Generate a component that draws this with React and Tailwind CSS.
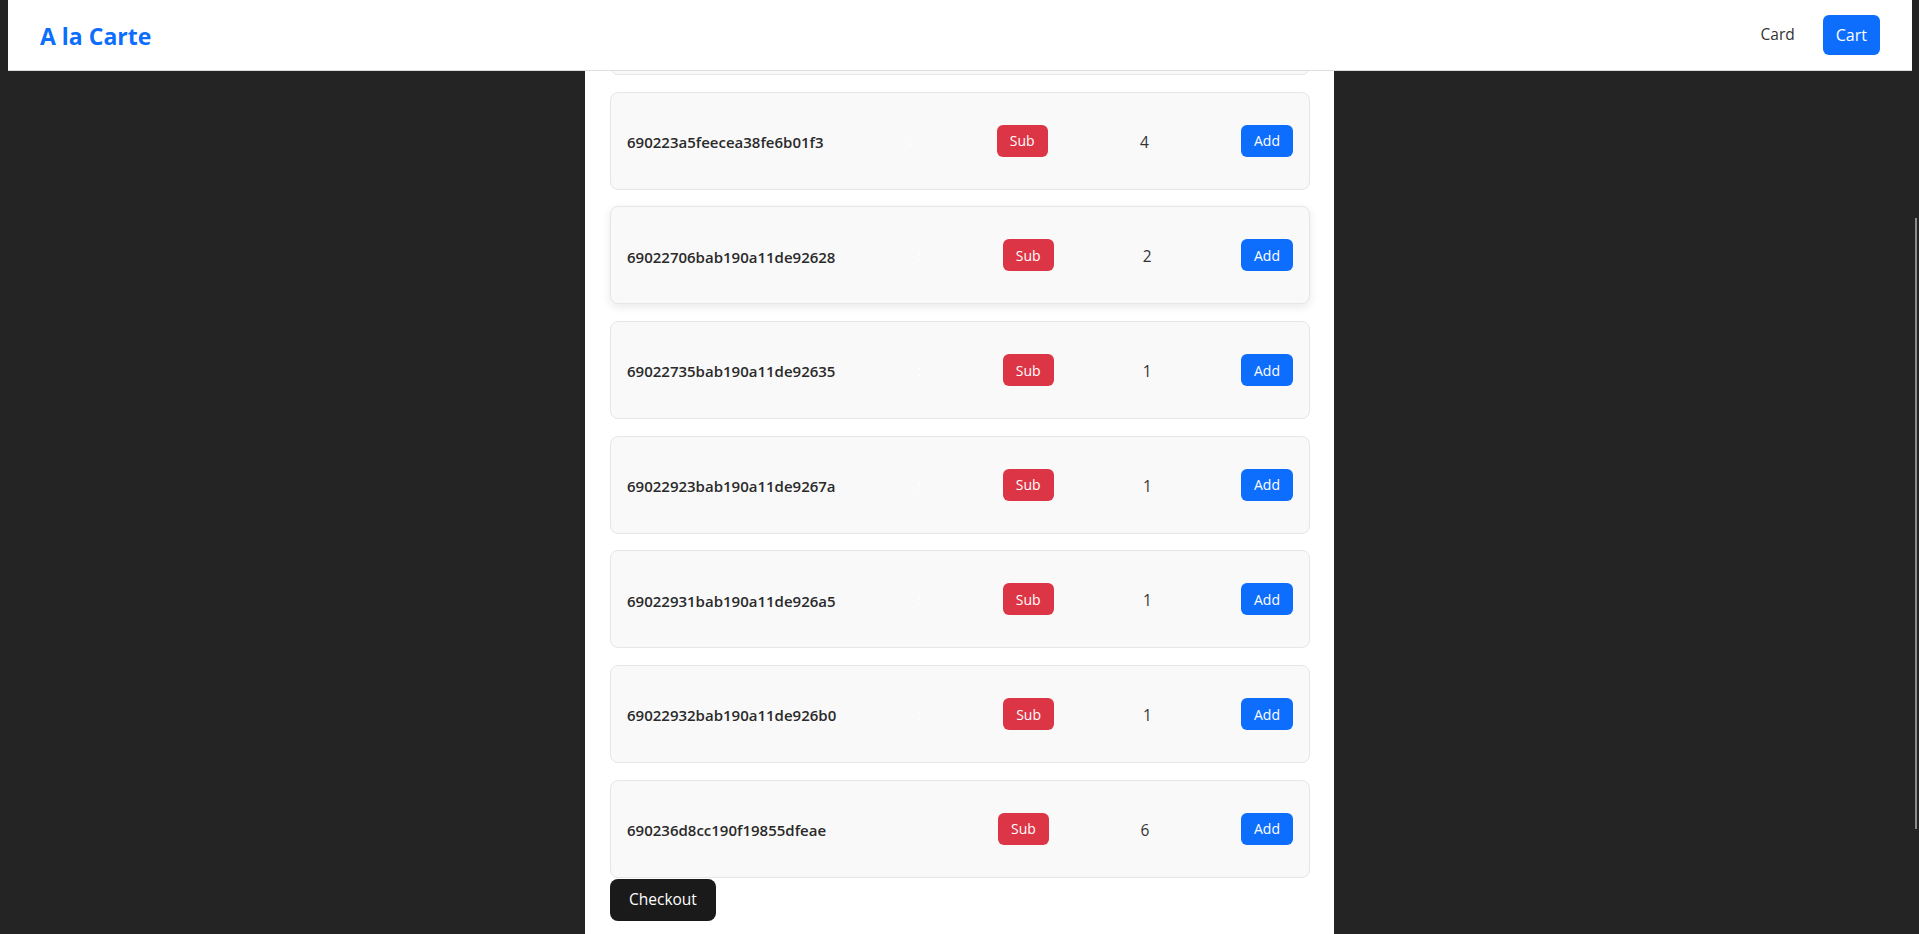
import React, { useState } from 'react';

const initialItems = [
  { id: '6902239afeecea38fe6b01e8', qty: 1 },
  { id: '690223a5feecea38fe6b01f3', qty: 4 },
  { id: '69022706bab190a11de92628', qty: 2, hover: true },
  { id: '69022735bab190a11de92635', qty: 1 },
  { id: '69022923bab190a11de9267a', qty: 1 },
  { id: '69022931bab190a11de926a5', qty: 1 },
  { id: '69022932bab190a11de926b0', qty: 1 },
  { id: '690236d8cc190f19855dfeae', qty: 6 },
];

// Navbar
const Navbar = () => (
  <nav className="fixed top-0 left-2 right-[7px] z-10 h-[71px] bg-white border-b border-[#dedede] flex items-center justify-between px-8">
    <a href="#" className="pt-[2px] text-[23px] font-bold text-[#0d6efd] leading-none">A la Carte</a>
    <div className="flex items-center gap-7">
      <a href="#" className="text-[15.5px] text-[#333]">Card</a>
      <button className="h-10 px-[13px] rounded-md bg-[#0d6efd] text-white text-[16px]">Cart</button>
    </div>
  </nav>
);

// One cart row
const CartRow = ({ item, onSub, onAdd }) => (
  <div
    className={`h-[98px] px-4 flex items-center justify-between rounded-lg border border-[#e6e6e6] bg-[#f9f9f9] ${
      item.hover ? 'shadow-[0_3px_10px_rgba(0,0,0,0.09)]' : ''
    }`}
  >
    <span className="pt-[3px] text-[15px] font-semibold text-[#2a2a2a]">{item.id}</span>
    <span className="text-white text-[15px]">:</span>
    <button onClick={onSub} className="h-8 px-[13px] rounded-md bg-[#dc3545] text-white text-[14px]">Sub</button>
    <span className="pt-[3px] w-6 text-center text-[15.5px] text-[#333]">{item.qty}</span>
    <button onClick={onAdd} className="h-8 px-[13px] rounded-md bg-[#0d6efd] text-white text-[14px]">Add</button>
  </div>
);

export default function App() {
  const [items, setItems] = useState(initialItems);

  const change = (i, d) =>
    setItems(items.map((it, j) => (j === i ? { ...it, qty: Math.max(0, it.qty + d) } : it)));

  return (
    <div className="h-screen overflow-hidden bg-[#242424] font-['Open_Sans','Noto_Sans',sans-serif]">
      <Navbar />
      <main className="mx-auto w-[749px] h-screen bg-white px-[25px] flex flex-col items-start">
        <div className="-mt-[23px] flex flex-col gap-[16.7px] w-[700px]">
          {items.map((item, i) => (
            <CartRow key={item.id} item={item} onSub={() => change(i, -1)} onAdd={() => change(i, 1)} />
          ))}
        </div>
        <button className="mt-[1px] h-[42px] px-[19px] rounded-lg bg-[#1a1a1a] text-white text-[15.5px] font-medium">
          Checkout
        </button>
      </main>
      {/* overlay scrollbar thumb */}
      <div className="fixed right-[2px] top-[218px] h-[611px] w-[2px] bg-[#8b8b8b]" />
    </div>
  );
}
